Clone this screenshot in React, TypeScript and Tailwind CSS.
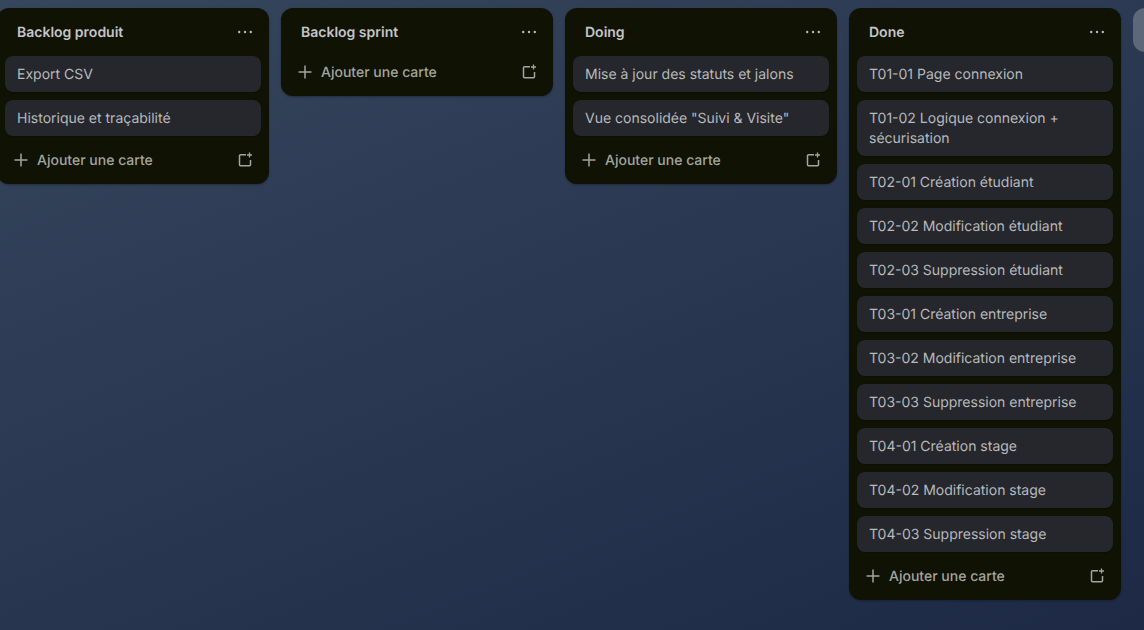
import React from "react";

function Dots() {
  return (
    <svg width="16" height="16" viewBox="0 0 16 16" fill="currentColor">
      <circle cx="2.2" cy="8" r="1.2" />
      <circle cx="8" cy="8" r="1.2" />
      <circle cx="13.8" cy="8" r="1.2" />
    </svg>
  );
}

function Plus() {
  return (
    <svg width="16" height="16" viewBox="0 0 16 16" fill="none" stroke="currentColor" strokeWidth="1.5">
      <path d="M8 1.5v13M1.5 8h13" />
    </svg>
  );
}

function Template() {
  return (
    <svg width="16" height="16" viewBox="0 0 16 16" fill="none" stroke="currentColor" strokeWidth="1.5">
      <path d="M9 2.75H3.5a1 1 0 0 0-1 1v9a1 1 0 0 0 1 1h9a1 1 0 0 0 1-1V8" />
      <path d="M12.5 0.5v5M10 3h5" strokeWidth="1.3" />
    </svg>
  );
}

function Column({ title, cards }: { title: string; cards: string[] }) {
  return (
    <div className="w-[272px] shrink-0 self-start rounded-xl bg-[#101204] text-[#b8b9bc] shadow-[0_1px_2px_#0b122466]">
      <div className="flex h-12 items-center justify-between pl-5 pr-4">
        <h2 className="pt-[2px] text-sm font-semibold leading-5 text-[#c4c5c7]">{title}</h2>
        <span className="flex h-8 w-8 translate-x-2 items-center justify-center"><Dots /></span>
      </div>
      {cards.length > 0 && (
        <ul className="flex flex-col gap-2 px-2">
          {cards.map((c) => (
            <li key={c} className="rounded-lg bg-[#25272c] px-3 pb-[7px] pt-[9px] text-sm leading-5 shadow-[0_1px_1px_#00000040]">
              {c}
            </li>
          ))}
        </ul>
      )}
      <div className={`flex items-center justify-between px-4 text-[#a3a59f] ${cards.length > 0 ? "h-12" : "h-10 pb-2"}`}>
        <div className="flex items-center gap-2">
          <Plus />
          <span className="pt-[2px] text-sm font-medium leading-5">Ajouter une carte</span>
        </div>
        <Template />
      </div>
    </div>
  );
}

export default function App() {
  return (
    <div className="h-[630px] w-[1144px] overflow-hidden bg-[linear-gradient(158deg,#36465c,#1d2945)] font-['Inter',sans-serif] antialiased [text-rendering:geometricPrecision]">
      <div className="ml-[-3px] flex items-start gap-3 pt-2">
        <Column title="Backlog produit" cards={["Export CSV", "Historique et traçabilité"]} />
        <Column title="Backlog sprint" cards={[]} />
        <Column title="Doing" cards={["Mise à jour des statuts et jalons", 'Vue consolidée "Suivi & Visite"']} />
        <Column
          title="Done"
          cards={[
            "T01-01 Page connexion",
            "T01-02 Logique connexion + sécurisation",
            "T02-01 Création étudiant",
            "T02-02 Modification étudiant",
            "T02-03 Suppression étudiant",
            "T03-01 Création entreprise",
            "T03-02 Modification entreprise",
            "T03-03 Suppression entreprise",
            "T04-01 Création stage",
            "T04-02 Modification stage",
            "T04-03 Suppression stage",
          ]}
        />
        <div className="h-11 w-[272px] shrink-0 rounded-xl bg-[#ffffff3d]" />
      </div>
    </div>
  );
}
